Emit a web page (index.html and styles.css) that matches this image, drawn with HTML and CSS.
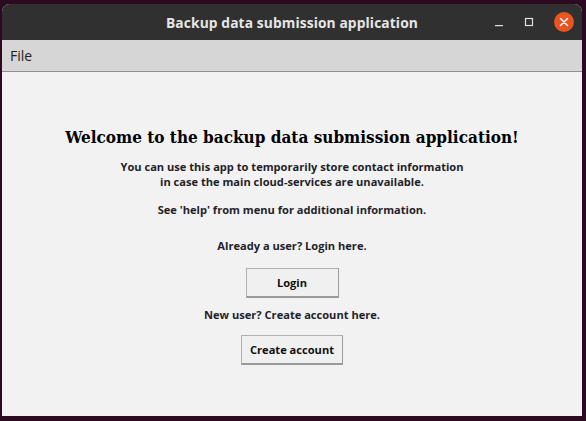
FILE: index.html
```html
<!DOCTYPE html>
<html>
<head>
<meta charset="utf-8">
<link rel="stylesheet" href="styles.css">
</head>
<body>
<div class="window">
  <div class="titlebar">
    <div class="title">Backup data submission application</div>
    <div class="controls">
      <span class="ctl minimize"><svg width="10" height="10" viewBox="0 0 10 10"><rect x="1" y="8" width="8" height="1.2" fill="#e0e0e0"/></svg></span>
      <span class="ctl maximize"><svg width="10" height="10" viewBox="0 0 10 10"><rect x="1.5" y="1.5" width="7" height="7" fill="none" stroke="#e0e0e0" stroke-width="1.2"/></svg></span>
      <span class="ctl close"><svg width="20" height="20" viewBox="0 0 20 20"><circle cx="10" cy="10" r="10" fill="#e95420"/><path d="M6.5 6.5 L13.5 13.5 M13.5 6.5 L6.5 13.5" stroke="#fff" stroke-width="1.5" stroke-linecap="round"/></svg></span>
    </div>
  </div>
  <div class="menubar"><span class="menu-item">File</span></div>
  <div class="content">
    <h1 class="heading">Welcome to the backup data submission application!</h1>
    <p class="text intro">You can use this app to temporarily store contact information<br>in case the main cloud-services are unavailable.</p>
    <p class="text help">See 'help' from menu for additional information.</p>
    <p class="text already">Already a user? Login here.</p>
    <button class="btn login">Login</button>
    <p class="text newuser">New user? Create account here.</p>
    <button class="btn create">Create account</button>
  </div>
</div>
</body>
</html>
```
FILE: styles.css
```css
html, body {
  margin: 0;
  padding: 0;
}
body {
  background: #2c0b20;
  width: 586px;
  height: 421px;
  overflow: hidden;
}
.window {
  margin: 4px 0 0 2px;
  width: 580px;
  height: 412px;
  display: flex;
  flex-direction: column;
  background: #f2f2f2;
  border-radius: 8px 8px 0 0;
  overflow: hidden;
}
.titlebar {
  height: 36px;
  background: #303030;
  display: flex;
  align-items: center;
  justify-content: center;
  position: relative;
  flex-shrink: 0;
}
.title {
  font-family: "Open Sans", sans-serif;
  font-weight: 700;
  font-size: 13.8px;
  color: #e6e6e6;
  letter-spacing: 0.1px;
}
.controls {
  position: absolute;
  right: 8px;
  top: 8px;
  display: flex;
  align-items: center;
}
.ctl {
  display: flex;
  align-items: center;
  justify-content: center;
}
.minimize { width: 10px; height: 10px; margin-right: 20px; }
.maximize { width: 10px; height: 10px; margin-right: 20px; }
.close { width: 20px; height: 20px; }
.menubar {
  height: 31px;
  background: #d6d6d6;
  border-bottom: 1px solid #8f8f8f;
  display: flex;
  align-items: center;
  flex-shrink: 0;
}
.menu-item {
  font-family: "Open Sans", sans-serif;
  font-size: 14px;
  color: #1e1e1e;
  margin-left: 8px;
}
.content {
  flex: 1;
  display: flex;
  flex-direction: column;
  align-items: center;
  padding-top: 54px;
}
.heading {
  margin: 0;
  font-family: "DejaVu Serif", serif;
  font-stretch: condensed;
  font-weight: 700;
  font-size: 17px;
  line-height: 22px;
  color: #000;
}
.text {
  margin: 0;
  font-family: "Open Sans", sans-serif;
  font-weight: 700;
  font-size: 11.1px;
  line-height: 15px;
  color: #1f1f2a;
  text-align: center;
}
.intro { margin-top: 11px; }
.help { margin-top: 13px; }
.already { margin-top: 21px; }
.login { margin-top: 15px; width: 93px; }
.newuser { margin-top: 9px; }
.create { margin-top: 13px; width: 102px; }
.btn {
  height: 30px;
  background: #f0f0f0;
  border: 1px solid #b0b0b0;
  border-right-color: #9a9a9a;
  border-bottom: 2px solid #9a9a9a;
  font-family: "Open Sans", sans-serif;
  font-weight: 700;
  font-size: 11.1px;
  color: #111;
  padding: 0;
}
```
